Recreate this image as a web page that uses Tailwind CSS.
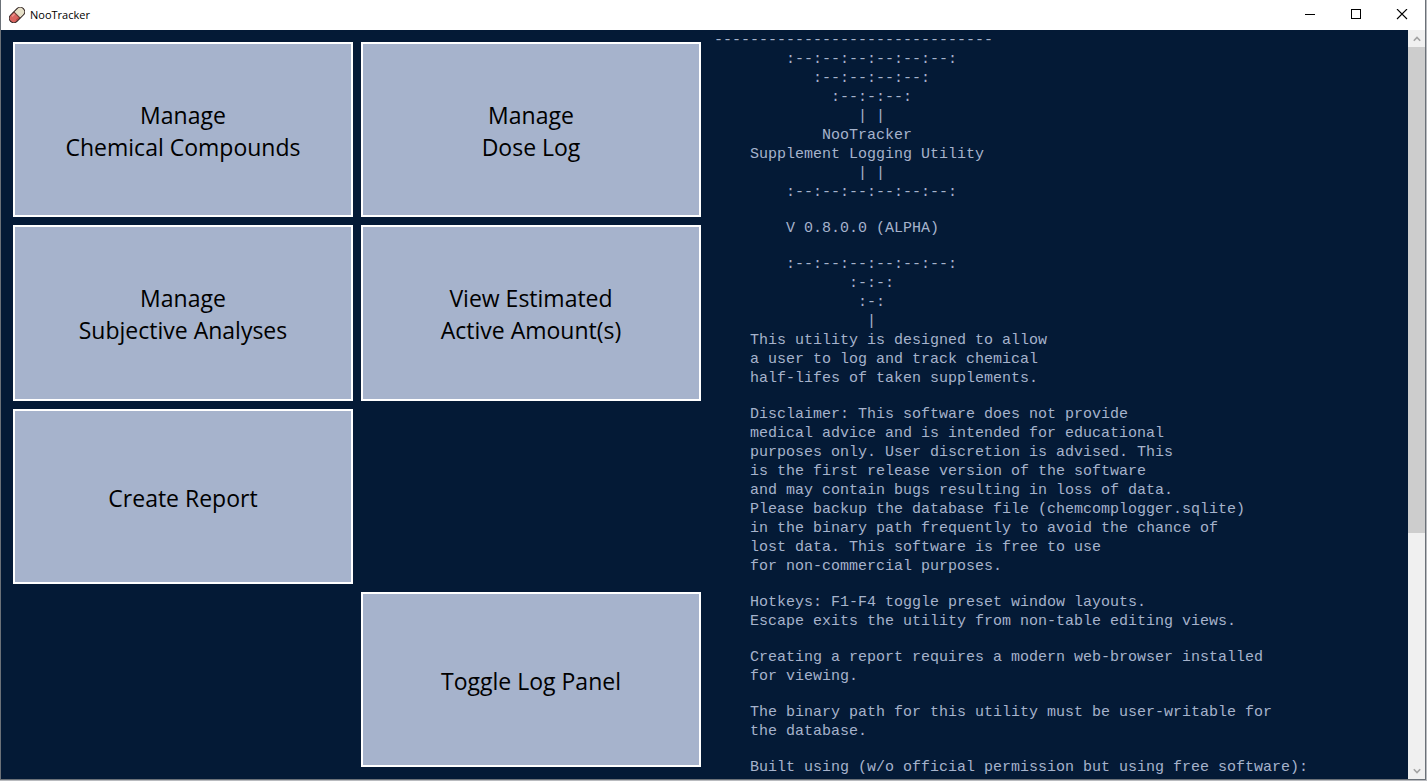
<!DOCTYPE html>
<html lang="en">
<head>
<meta charset="utf-8">
<title>NooTracker</title>
<script src="https://cdn.jsdelivr.net/npm/@tailwindcss/browser@4"></script>
</head>
<body class="h-screen overflow-hidden bg-[#b9bbbf] pr-px pb-px font-['Open_Sans',sans-serif]">
<div class="flex h-full flex-col border-x border-b border-[#6b7178] bg-[#041a36]">
  <header class="flex h-[30px] shrink-0 items-center bg-white pl-2 text-black">
    <svg class="h-4 w-4" viewBox="0 0 16 16" aria-hidden="true">
      <g transform="rotate(-45 8 8)">
        <path d="M8 3.500H3.500a4.500 4.500 0 0 0 0 9H8z" fill="#d9645f"/>
        <path d="M8 3.500h4.500a4.500 4.500 0 0 1 0 9H8z" fill="#e6e0c8"/>
        <path d="M7.500 5.500H3.500" stroke="#ee968e" stroke-width="1.500"/>
        <path d="M7.500 11.200h-4" stroke="#b4423f" stroke-width="1"/>
        <path d="M8 3.500v9" stroke="#6a3a33" stroke-width="1"/>
        <rect x="-1" y="3.500" width="18" height="9" rx="4.500" fill="none" stroke="#2b1c1b" stroke-width="1"/>
      </g>
    </svg>
    <h1 class="ml-[5px] flex-1 text-[11px] leading-4">NooTracker</h1>
    <button class="flex h-full w-[46px] items-center justify-center" aria-label="Minimize">
      <svg class="h-3 w-3" viewBox="0 0 12 12" fill="none" stroke="#000" shape-rendering="crispEdges"><path d="M1 5.500h10"/></svg>
    </button>
    <button class="flex h-full w-[46px] items-center justify-center" aria-label="Maximize">
      <svg class="h-3 w-3" viewBox="0 0 12 12" fill="none" stroke="#000" shape-rendering="crispEdges"><path d="M1.500 .5h9v9h-9z"/></svg>
    </button>
    <button class="flex h-full w-[46px] items-center justify-center" aria-label="Close">
      <svg class="h-3 w-3" viewBox="0 0 12 12" fill="none" stroke="#000" stroke-width="1.100"><path d="M1 0l10 10M11 0L1 10"/></svg>
    </button>
  </header>

  <main class="flex min-h-0 flex-1">
    <nav class="grid w-1/2 shrink-0 grid-cols-2 grid-rows-4 gap-2 p-3 text-[23px] leading-8 text-black *:border-2 *:border-white *:bg-[#a6b3cc] *:pt-[3px]">
      <button>Manage<br>Chemical Compounds</button>
      <button>Manage<br>Dose Log</button>
      <button>Manage<br>Subjective Analyses</button>
      <button>View Estimated<br>Active Amount(s)</button>
      <button>Create Report</button>
      <button class="col-start-2 row-start-4">Toggle Log Panel</button>
    </nav>

    <section class="flex min-w-0 flex-1 flex-col gap-[17px] overflow-hidden pt-px pl-px text-[15px] leading-[19px] text-[#a6b3cc] *:shrink-0 *:font-['Liberation_Mono',monospace]" aria-label="Log">
<pre>-------------------------------
        :--:--:--:--:--:--:
           :--:--:--:--:
             :--:-:--:
                | |
            NooTracker
    Supplement Logging Utility
                | |
        :--:--:--:--:--:--:</pre>
<pre>        V 0.8.0.0 (ALPHA)</pre>
<pre>        :--:--:--:--:--:--:
               :-:-:
                :-:
                 |
    This utility is designed to allow
    a user to log and track chemical
    half-lifes of taken supplements.</pre>
<pre>    Disclaimer: This software does not provide
    medical advice and is intended for educational
    purposes only. User discretion is advised. This
    is the first release version of the software
    and may contain bugs resulting in loss of data.
    Please backup the database file (chemcomplogger.sqlite)
    in the binary path frequently to avoid the chance of
    lost data. This software is free to use
    for non-commercial purposes.</pre>
<pre>    Hotkeys: F1-F4 toggle preset window layouts.
    Escape exits the utility from non-table editing views.</pre>
<pre>    Creating a report requires a modern web-browser installed
    for viewing.</pre>
<pre>    The binary path for this utility must be user-writable for
    the database.</pre>
<pre>    Built using (w/o official permission but using free software):</pre>
    </section>

    <div class="flex w-[17px] shrink-0 flex-col bg-[#f0f0f0]">
      <button class="flex h-[17px] shrink-0 items-center justify-center" aria-label="Scroll up">
        <svg class="h-2 w-2" viewBox="0 0 8 8" fill="none" stroke="#a3a3a3" stroke-width="1.600"><path d="M.8 5.800L4 2.400l3.200 3.400"/></svg>
      </button>
      <div class="min-h-0 flex-1"><div class="h-[68%] bg-[#cdcdcd]"></div></div>
      <button class="flex h-[17px] shrink-0 items-center justify-center" aria-label="Scroll down">
        <svg class="h-2 w-2" viewBox="0 0 8 8" fill="none" stroke="#a3a3a3" stroke-width="1.600"><path d="M.8 2.200L4 5.600l3.200-3.400"/></svg>
      </button>
    </div>
  </main>
</div>
</body>
</html>
